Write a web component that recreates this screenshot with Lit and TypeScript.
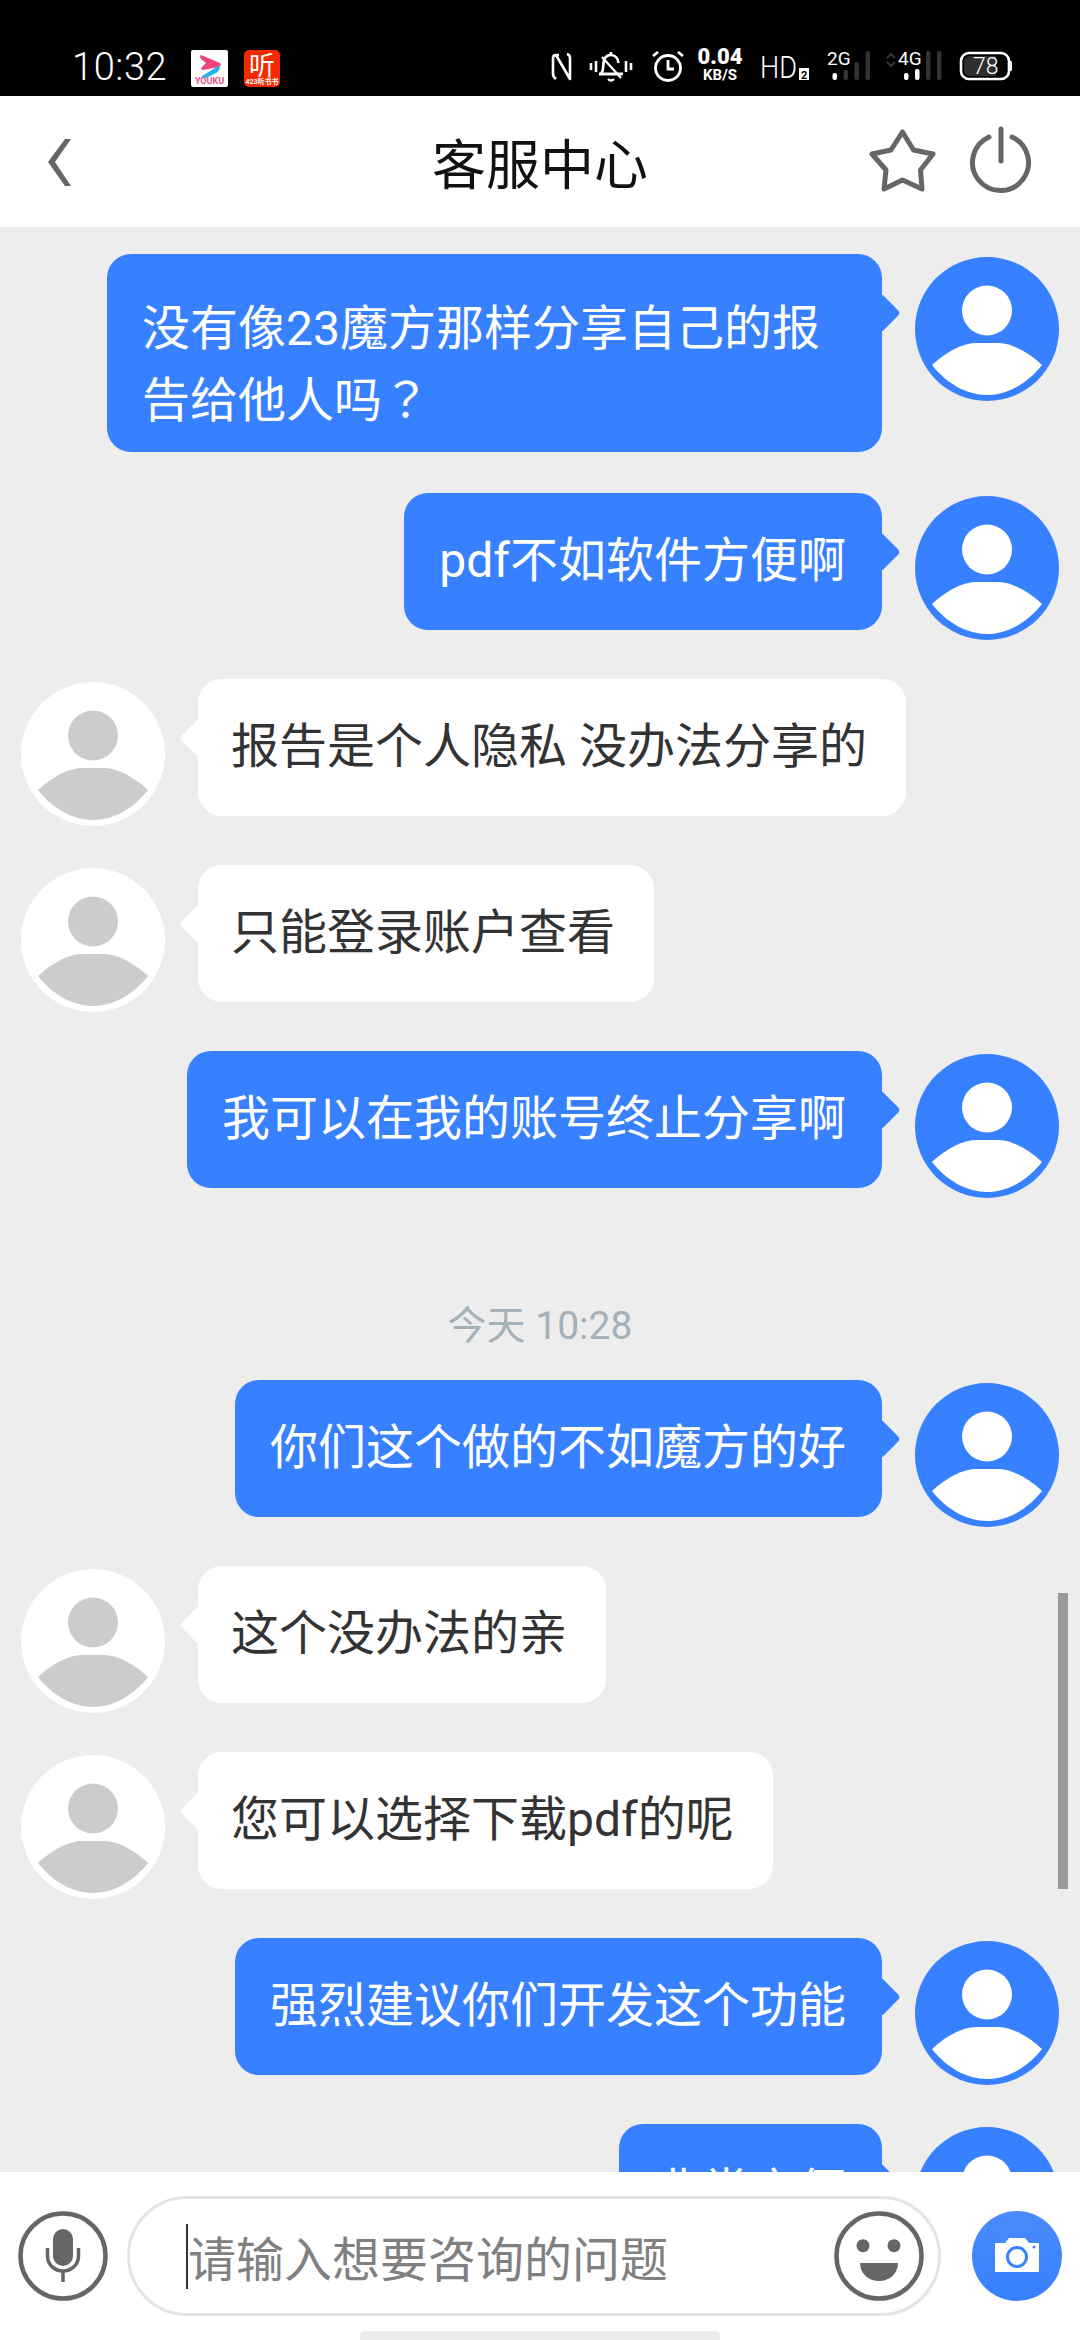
import { LitElement, html, css, svg, TemplateResult } from "lit";
import { customElement } from "lit/decorators.js";

type Msg = { side: "me" | "cs" | "time"; text: string | TemplateResult };

const messages: Msg[] = [
  { side: "me", text: html`没有像23魔方那样分享自己的报告给他人吗<span class="tc">？</span>` },
  { side: "me", text: "pdf不如软件方便啊" },
  { side: "cs", text: "报告是个人隐私 没办法分享的" },
  { side: "cs", text: "只能登录账户查看" },
  { side: "me", text: "我可以在我的账号终止分享啊" },
  { side: "time", text: "今天 10:28" },
  { side: "me", text: "你们这个做的不如魔方的好" },
  { side: "cs", text: "这个没办法的亲" },
  { side: "cs", text: "您可以选择下载pdf的呢" },
  { side: "me", text: "强烈建议你们开发这个功能" },
  { side: "me", text: "非常方便" },
];

const avatar = (bg: string, fg: string) => html`
  <svg class="avatar" viewBox="0 0 144 144">
    <circle cx="72" cy="72" r="72" fill=${bg} />
    <circle cx="72" cy="53.5" r="25" fill=${fg} />
    <path
      d="M17 108C32 94 48 86 62 86H82C96 86 112 94 127 108C112 127 92 138 72 138C52 138 32 127 17 108Z"
      fill=${fg}
    />
  </svg>
`;

const bar = (x: number, y: number, on: boolean) =>
  svg`<rect x=${x} y=${y} width="4.5" height=${34 - y} rx="2" fill=${on ? "#fff" : "#333"} />`;

@customElement("app-root")
export class AppRoot extends LitElement {
  static styles = css`
    :host {
      display: flex;
      flex-direction: column;
      width: 1080px;
      height: 2340px;
      overflow: hidden;
      position: relative;
      background: #ededed;
      font-family: Roboto, "Noto Sans CJK SC", sans-serif;
    }

    svg {
      display: block;
      flex-shrink: 0;
    }

    svg text {
      font-family: Roboto, "Noto Sans CJK SC", sans-serif;
    }

    .tc {
      font-family: "Noto Sans CJK TC", sans-serif;
      line-height: 0;
    }

    .status {
      height: 96px;
      background: #000;
      color: #fff;
      display: flex;
      align-items: flex-start;
      padding: 46px 0 0 72px;
      box-sizing: border-box;
      flex-shrink: 0;
    }

    .clock {
      width: 119px;
      font-size: 38px;
      line-height: 42px;
      font-weight: 300;
      letter-spacing: 0.6px;
      color: #fff;
    }

    .app-icon {
      margin-top: 4px;
    }

    .app-icon + .app-icon {
      margin-left: 16px;
    }

    .tray {
      display: flex;
      margin-left: 270px;
    }

    .m10 {
      margin-left: 10px;
    }

    .m13 {
      margin-left: 13px;
    }

    .m14 {
      margin-left: 14px;
    }

    .m15 {
      margin-left: 15px;
    }

    .m16 {
      margin-left: 16px;
    }

    .speed {
      width: 50px;
      height: 40px;
      text-align: center;
      font-weight: 700;
      color: #fff;
    }

    .speed b {
      display: block;
      font-size: 22px;
      line-height: 22px;
    }

    .speed span {
      display: block;
      font-size: 15px;
      line-height: 15px;
    }

    .header {
      height: 131px;
      background: #fff;
      flex-shrink: 0;
      display: flex;
      align-items: center;
      justify-content: center;
      position: relative;
    }

    .title {
      font-size: 54px;
      color: #111;
      font-weight: 400;
    }

    .header-icons {
      position: absolute;
      left: 0;
      top: 0;
      width: 1080px;
      height: 131px;
    }

    .chat {
      flex: 1;
      min-height: 0;
      overflow: hidden;
      position: relative;
      padding-top: 27px;
    }

    .row {
      display: flex;
      align-items: flex-start;
      gap: 33px;
      padding: 0 21px;
      min-height: 147px;
      margin-bottom: 39px;
    }

    .row:first-child {
      margin-bottom: 41px;
    }

    .row:first-child .bubble {
      padding-top: 39px;
      padding-bottom: 15px;
    }

    .row.me {
      justify-content: flex-end;
    }

    .avatar {
      width: 144px;
      height: 144px;
      margin-top: 3px;
      flex-shrink: 0;
    }

    .bubble {
      position: relative;
      box-sizing: border-box;
      max-width: 775px;
      min-height: 137px;
      padding: 32px 36px 33px;
      border-radius: 24px;
      font-size: 48px;
      line-height: 72px;
    }

    .bubble::after {
      content: "";
      position: absolute;
      top: 45px;
      width: 28px;
      height: 28px;
      border-radius: 4px;
      transform: rotate(45deg);
      background: inherit;
    }

    .me .bubble {
      background: #3780ff;
      color: #fff;
      padding-left: 35px;
    }

    .me .bubble::after {
      right: -13px;
    }

    .cs .bubble {
      background: #fff;
      color: #333;
      padding-left: 33px;
      padding-right: 39px;
    }

    .cs .bubble::after {
      left: -13px;
    }

    .time {
      font-size: 39px;
      line-height: 48px;
      color: #a4b1b8;
      text-align: center;
      margin: 104px 0 30px;
    }

    .scrollbar {
      position: absolute;
      left: 1058px;
      top: 1366px;
      width: 10px;
      height: 296px;
      background: #999;
    }

    .footer {
      height: 168px;
      background: #fff;
      flex-shrink: 0;
      position: relative;
      display: flex;
      align-items: flex-start;
      padding: 24px 0 0 18px;
      box-sizing: border-box;
    }

    .footer > svg {
      margin-top: 15px;
    }

    .input {
      box-sizing: border-box;
      width: 814px;
      height: 120px;
      margin: 0 31px 0 19px;
      border: 3px solid #e4e4e8;
      border-radius: 60px;
      display: flex;
      align-items: center;
      padding: 0 14px 0 56px;
    }

    .caret {
      width: 2px;
      height: 65px;
      background: #333;
      flex-shrink: 0;
    }

    .placeholder {
      flex: 1;
      font-size: 48px;
      color: #808080;
      white-space: nowrap;
    }

    .home {
      position: absolute;
      left: 360px;
      bottom: 0;
      width: 360px;
      height: 9px;
      background: #ebebeb;
      border-radius: 5px 5px 0 0;
    }
  `;

  private renderTray() {
    return html`
      <div class="tray">
        <svg width="24" height="40" viewBox="0 0 24 40" fill="none" stroke="#fff" stroke-width="2.6">
          <path d="M9 9H6Q3 9 3 12V28Q3 31 6 33" />
          <path d="M6 9L20 33V12Q20 9 17 8" stroke-linejoin="round" />
        </svg>
        <svg class="m13" width="48" height="40" viewBox="0 0 48 40" fill="none" stroke="#fff" stroke-width="2.6">
          <path d="M24 6V9M14 28C17 24 16 20 16.500 17C17 11 20 9 24 9C28 9 31 12 31.500 17" />
          <path d="M12 28H36" stroke-width="3" />
          <path d="M15 11L34 32" stroke-width="2.2" />
          <path d="M21 33Q24 36 27 33" stroke-width="2.2" />
          <path d="M4 17V24M9 15V26M39 15V26M44 17V24" />
        </svg>
        <svg class="m16" width="34" height="40" viewBox="0 0 34 40" fill="none" stroke="#fff" stroke-width="2.8">
          <circle cx="17" cy="22" r="12.500" />
          <path d="M17 14V23H23M2 10L7 6M32 10L27 6" />
        </svg>
        <div class="speed m10"><b>0.04</b><span>KB/S</span></div>
        <svg class="m15" width="50" height="40" viewBox="0 0 50 40">
          <text x="0" y="32" font-size="32" font-weight="300" fill="#fff" textLength="37" lengthAdjust="spacingAndGlyphs">HD</text>
          <rect x="39" y="22" width="10" height="12" fill="#fff" />
          <text x="41" y="33" font-size="11" font-weight="700" fill="#000">2</text>
        </svg>
        <svg class="m15" width="48" height="40" viewBox="0 0 48 40">
          <text x="2" y="19" font-size="19" fill="#fff">2G</text>
          ${bar(7.5, 27, true)} ${bar(18.5, 24, false)} ${bar(29.5, 16, false)} ${bar(40.5, 5, false)}
        </svg>
        <svg class="m13" width="58" height="40" viewBox="0 0 58 40">
          <path d="M1 12L5 8L9 12M1 16L5 20L9 16" fill="none" stroke="#333" stroke-width="2.2" />
          <text x="12" y="19" font-size="19" fill="#fff">4G</text>
          ${bar(18, 27, true)} ${bar(29, 23, true)} ${bar(40, 5, false)} ${bar(51, 5, false)}
        </svg>
        <svg class="m14" width="54" height="40" viewBox="0 0 54 40">
          <rect x="3" y="7" width="48" height="26" rx="8" fill="none" stroke="#fff" stroke-width="2.6" />
          <path d="M13 10H38V30H13Q6 30 6 24V16Q6 10 13 10Z" fill="#2e2e2e" />
          <path d="M52.500 15Q54 20 52.500 25" fill="none" stroke="#fff" stroke-width="2" />
          <text x="15" y="28" font-size="23" font-weight="300" fill="#fff">78</text>
        </svg>
      </div>
    `;
  }

  private renderMessage(m: Msg) {
    if (m.side === "time") return html`<div class="time">${m.text}</div>`;
    if (m.side === "me") {
      return html`<div class="row me">
        <div class="bubble">${m.text}</div>
        ${avatar("#3780ff", "#fff")}
      </div>`;
    }
    return html`<div class="row cs">
      ${avatar("#fff", "#ccc")}
      <div class="bubble">${m.text}</div>
    </div>`;
  }

  render() {
    return html`
      <div class="status">
        <div class="clock">10:32</div>
        <svg class="app-icon" width="37" height="37" viewBox="0 0 37 37">
          <rect width="37" height="37" rx="2" fill="#fff" />
          <path d="M10 5L29 13Q31 15 28 17L12 20Q9 20 11 17L15 13L10 9Q8 6 10 5Z" fill="#f0457c" />
          <path d="M11 26L29 15Q29 21 25 23L15 28Q10 29 11 26Z" fill="#22b2f2" />
          <text x="18.500" y="34" font-size="9" font-weight="700" fill="#e0558c" text-anchor="middle">YOUKU</text>
        </svg>
        <svg class="app-icon" width="36" height="37" viewBox="0 0 36 37">
          <rect width="36" height="37" rx="5" fill="#f52a00" />
          <text x="18" y="25" font-size="26" fill="#fff" text-anchor="middle">听</text>
          <text x="18" y="34" font-size="7" font-weight="700" fill="#fff" text-anchor="middle">423听书书</text>
        </svg>
        ${this.renderTray()}
      </div>
      <div class="header">
        <div class="title">客服中心</div>
        <svg class="header-icons" viewBox="0 0 1080 131" fill="none">
          <path d="M71 43H65L48 66L65 90H71L55 66Z" fill="#666" />
          <path
            d="M902.500 36L913.500 54L933 58L920.500 74L922 93L902.500 84L884 93L886 74L872 58L891 54Z"
            stroke="#666"
            stroke-width="5"
            stroke-linejoin="round"
          />
          <path d="M989 41A28 28 0 1 0 1012 41" stroke="#666" stroke-width="5" stroke-linecap="round" />
          <path d="M1001 33V65" stroke="#666" stroke-width="5" stroke-linecap="round" />
        </svg>
      </div>
      <div class="chat">
        ${messages.map((m) => this.renderMessage(m))}
        <div class="scrollbar"></div>
      </div>
      <div class="footer">
        <svg width="90" height="90" viewBox="0 0 90 90" fill="none">
          <circle cx="45" cy="45" r="42.500" stroke="#666" stroke-width="4.500" />
          <rect x="35" y="18" width="20" height="37" rx="10" fill="#666" />
          <path d="M29.500 37V45C29.500 54 37 60 45 60C53 60 60.500 54 60.500 45V37" stroke="#666" stroke-width="3.500" />
          <path d="M45 60V71" stroke="#666" stroke-width="3.500" />
        </svg>
        <div class="input">
          <div class="caret"></div>
          <div class="placeholder">请输入想要咨询的问题</div>
          <svg width="90" height="90" viewBox="0 0 90 90" fill="none">
            <circle cx="45" cy="45" r="42.500" stroke="#666" stroke-width="4.500" />
            <circle cx="29" cy="34.700" r="6.500" fill="#666" />
            <circle cx="60" cy="34.700" r="6.500" fill="#666" />
            <path d="M26 52H64C64 63 55 70 45 70C35 70 26 63 26 52Z" fill="#666" />
          </svg>
        </div>
        <svg width="90" height="90" viewBox="0 0 90 90" fill="none">
          <defs>
            <linearGradient id="cam" x1="0" y1="0" x2="0" y2="1">
              <stop offset="0" stop-color="#4a8bfb" />
              <stop offset="1" stop-color="#3780ff" />
            </linearGradient>
          </defs>
          <circle cx="45" cy="45" r="45" fill="url(#cam)" />
          <path
            d="M24 32H33L37 27H53L57 32H66Q67 32 67 33V60Q67 61 66 61H24Q23 61 23 60V33Q23 32 24 32Z"
            fill="#fff"
          />
          <circle cx="45" cy="46" r="9.500" stroke="#3780ff" stroke-width="3" />
          <circle cx="62" cy="36" r="1.500" fill="#3780ff" />
        </svg>
        <div class="home"></div>
      </div>
    `;
  }
}
